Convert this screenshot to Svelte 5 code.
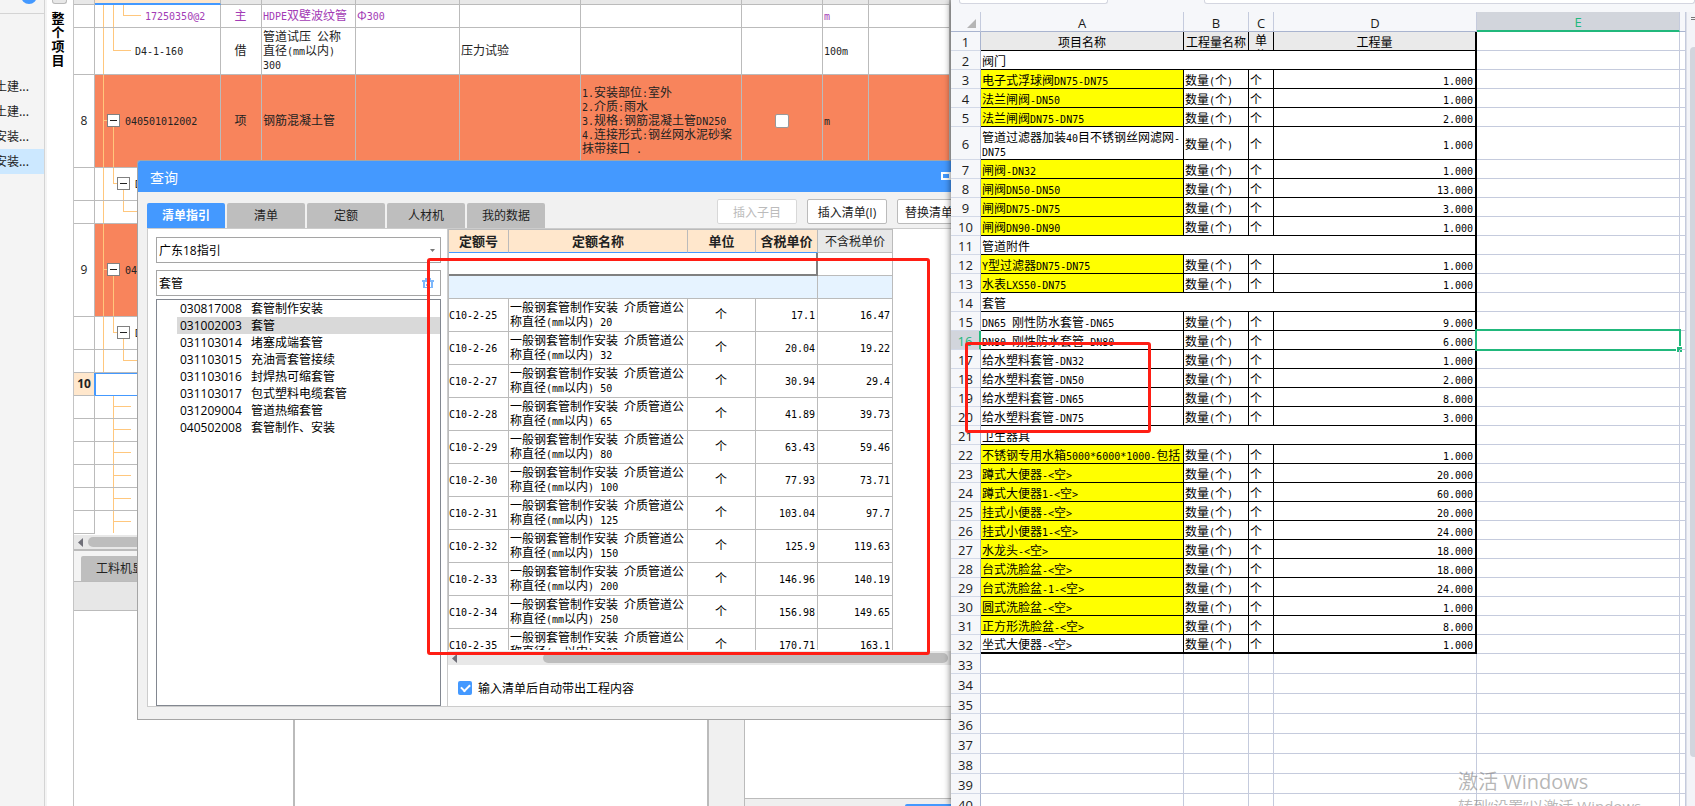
<script>
  const parts = (t) => String(t).split(/([\x20-\x7e]+)/);

  const projects = ['土建...', '土建...', '安装...', '安装...'];

  const bigOrange = { v: [[8, 0, 93], [18, 52, 93]], h: [[45, 8, 12]], box: [12, 39] };
  const nested = { v: [[8, 0, 33], [18, 0, 15], [28, 22, 33]], h: [[15, 18, 22]], box: [22, 9] };
  const stub = { v: [[18, 0, 23]], h: [[10, 18, 36]] };
  const items = [
    { h: 23, tree: { v: [[8, 0, 23], [18, 0, 23], [28, 0, 10]], h: [[10, 28, 46]] }, indent: 50, code: '17250350@2', kind: '主', name: 'HDPE双壁波纹管', spec: 'Φ300', unit: 'm', tone: 'purple' },
    { h: 47, tree: { v: [[8, 0, 47], [18, 0, 22]], h: [[22, 18, 36]] }, indent: 40, code: 'D4-1-160', kind: '借', name: '管道试压 公称\n直径(mm以内)\n300', work: '压力试验', unit: '100m' },
    { h: 93, no: '8', tree: bigOrange, indent: 30, code: '040501012002', kind: '项', name: '钢筋混凝土管', desc: '1.安装部位:室外\n2.介质:雨水\n3.规格:钢筋混凝土管DN250\n4.连接形式:钢丝网水泥砂桨\n抹带接口 .', check: true, unit: 'm', tone: 'orange' },
    { h: 33, tree: nested, indent: 40, code: 'D' },
    { h: 23, tree: { v: [[8, 0, 23], [28, 0, 10]], h: [[10, 28, 46]] } },
    { h: 93, no: '9', tree: bigOrange, indent: 30, code: '04', tone: 'orange' },
    { h: 33, tree: nested, indent: 40, code: 'D' },
    { h: 23, tree: { v: [[8, 0, 23], [28, 0, 10]], h: [[10, 28, 46]] } },
    { h: 23, no: '10', tree: { v: [], h: [] }, tone: 'current' },
    ...Array.from({ length: 6 }, () => ({ h: 23, tree: stub }))
  ];

  const tabs = ['清单指引', '清单', '定额', '人材机', '我的数据'];
  const guide = [
    ['030817008', '套管制作安装'],
    ['031002003', '套管'],
    ['031103014', '堵塞成端套管'],
    ['031103015', '充油膏套管接续'],
    ['031103016', '封焊热可缩套管'],
    ['031103017', '包式塑料电缆套管'],
    ['031209004', '管道热缩套管'],
    ['040502008', '套管制作、安装']
  ];
  const quotas = [
    [25, 20, '17.1', '16.47'],
    [26, 32, '20.04', '19.22'],
    [27, 50, '30.94', '29.4'],
    [28, 65, '41.89', '39.73'],
    [29, 80, '63.43', '59.46'],
    [30, 100, '77.93', '73.71'],
    [31, 125, '103.04', '97.7'],
    [32, 150, '125.9', '119.63'],
    [33, 200, '146.96', '140.19'],
    [34, 250, '156.98', '149.65'],
    [35, 300, '170.71', '163.1']
  ];

  const sheet = [
    ['阀门'],
    ['电子式浮球阀DN75-DN75', '1.000', 1],
    ['法兰闸阀-DN50', '1.000', 1],
    ['法兰闸阀DN75-DN75', '2.000', 1],
    ['管道过滤器加装40目不锈钢丝网滤网-\nDN75', '1.000', 0],
    ['闸阀-DN32', '1.000', 1],
    ['闸阀DN50-DN50', '13.000', 1],
    ['闸阀DN75-DN75', '3.000', 1],
    ['闸阀DN90-DN90', '1.000', 1],
    ['管道附件'],
    ['Y型过滤器DN75-DN75', '1.000', 1],
    ['水表LXS50-DN75', '1.000', 1],
    ['套管'],
    ['DN65 刚性防水套管-DN65', '9.000', 0],
    ['DN80 刚性防水套管-DN80', '6.000', 0],
    ['给水塑料套管-DN32', '1.000', 0],
    ['给水塑料套管-DN50', '2.000', 0],
    ['给水塑料套管-DN65', '8.000', 0],
    ['给水塑料套管-DN75', '3.000', 0],
    ['卫生器具'],
    ['不锈钢专用水箱5000*6000*1000-包括', '1.000', 1],
    ['蹲式大便器-<空>', '20.000', 1],
    ['蹲式大便器1-<空>', '60.000', 1],
    ['挂式小便器-<空>', '20.000', 1],
    ['挂式小便器1-<空>', '24.000', 1],
    ['水龙头-<空>', '18.000', 1],
    ['台式洗脸盆-<空>', '18.000', 1],
    ['台式洗脸盆-1-<空>', '24.000', 1],
    ['圆式洗脸盆-<空>', '1.000', 1],
    ['正方形洗脸盆-<空>', '8.000', 1],
    ['坐式大便器-<空>', '1.000', 0]
  ];
  const blanks = [33, 34, 35, 36, 37, 38, 39, 40];
  const selectedRow = 16;
</script>

{#snippet mix(t)}{#each parts(t ?? '') as s, i}{#if i % 2}<span class="latin">{s}</span>{:else}{s}{/if}{/each}{/snippet}

<div class="desktop">
  <main class="app">
    <aside class="projects">
      <div class="projects-head"><span class="dot"></span></div>
      <ul>
        {#each projects as p, i}
          <li class:active={i === 3}>{p}</li>
        {/each}
      </ul>
    </aside>
    <div class="rail">
      <span class="rail-knob"></span>
      <span class="rail-text">整个项目</span>
    </div>

    <section class="work">
      <table class="bill">
        <colgroup>
          <col style="width:21px" /><col style="width:126px" /><col style="width:41px" /><col style="width:94px" />
          <col style="width:104px" /><col style="width:121px" /><col style="width:161px" /><col style="width:81px" />
          <col style="width:46px" /><col /><col style="width:1px" />
        </colgroup>
        <thead>
          <tr>
            <th></th><th class="lead"></th><th></th><th></th><th></th><th></th><th></th><th></th><th></th><th></th><th></th>
          </tr>
        </thead>
        <tbody>
          {#each items as r}
            <tr class={r.tone} style="height:{r.h}px">
              <td class="no">{r.no ?? ''}</td>
              <td class="code" style="padding-left:{r.indent ?? 0}px"><svg width="60" height={r.h} aria-hidden="true">{#each r.tree.v as [x, a, b]}<rect {x} y={a} width="1" height={b - a} />{/each}{#each r.tree.h as [y, a, b]}<rect x={a} {y} width={b - a} height="1" />{/each}</svg>{#if r.tree.box}<button class="fold" aria-label="折叠" style="left:{r.tree.box[0]}px;top:{r.tree.box[1]}px"></button>{/if}{@render mix(r.code)}</td>
              <td class="mid">{r.kind ?? ''}</td>
              <td>{@render mix(r.name)}</td>
              <td>{@render mix(r.spec)}</td>
              <td>{@render mix(r.work)}</td>
              <td>{@render mix(r.desc)}</td>
              <td class="mid">{#if r.check}<input class="tick" type="checkbox" aria-label="主要清单" />{/if}</td>
              <td>{@render mix(r.unit)}</td>
              <td></td>
              <td></td>
            </tr>
          {/each}
        </tbody>
      </table>

      <div class="hbar">
        <svg width="5" height="9" viewBox="0 0 5 9"><path d="M5 0v9L0 4.500z" fill="#6f6f78" /></svg>
        <span class="thumb"></span>
      </div>
      <div class="strip"><button class="strip-tab">工料机显示</button></div>
      <div class="strip-tools"></div>
      <div class="panes">
        <div class="pane one"></div>
        <div class="pane two"></div>
        <div class="pane gap"></div>
        <div class="pane three"><div class="pane-foot"><span></span></div></div>
      </div>
    </section>

    <section class="dialog">
      <header>
        <h1>查询</h1>
        <svg width="10" height="8" viewBox="0 0 10 8"><path d="M1 0v8M0 1h10M0 7h10M9 0v8" fill="none" stroke="#fff" stroke-width="2" /></svg>
      </header>
      <div class="bar">
        <nav>
          {#each tabs as t, i}
            <button class:active={i === 0}>{t}</button>
          {/each}
        </nav>
        <div class="actions">
          <button disabled>插入子目</button>
          <button>插入清单(I)</button>
          <button class="cut">替换清单</button>
        </div>
      </div>
      <div class="body">
        <div class="guide">
          <div class="field">
            <select aria-label="指引库"><option>广东18指引</option></select>
            <svg width="5" height="3" viewBox="0 0 5 3"><path d="M0 0h5L2.500 3z" fill="#777" /></svg>
          </div>
          <div class="field search">
            <input type="text" value="套管" aria-label="搜索" />
            <svg width="12" height="12" viewBox="0 0 12 12"><path d="M0 3h12v2H0zM3 1h2v2H3zM7 1h2v2H7zM1 5h2v6H1zM9 5h2v6H9zM3 10h6v1H3zM4 7h1v2H4zM7 6h1v2H7z" fill="#7db7fb" /></svg>
          </div>
          <ul class="list">
            {#each guide as [code, name], i}
              <li class:active={i === 1}><span>{code}</span>{name}</li>
            {/each}
          </ul>
        </div>
        <div class="quota">
          <div class="scroll">
            <table>
              <colgroup>
                <col style="width:60px" /><col style="width:179px" /><col style="width:68px" /><col style="width:62px" /><col style="width:75px" />
              </colgroup>
              <thead>
                <tr><th>定额号</th><th>定额名称</th><th>单位</th><th>含税单价</th><th class="plain">不含税单价</th></tr>
              </thead>
              <tbody>
                <tr class="filter"><td colspan="4"></td><td></td></tr>
                <tr class="group"><td colspan="4"></td><td></td></tr>
                {#each quotas as [n, d, a, b]}
                  <tr class="item">
                    <td class="qcode">{@render mix('C10-2-' + n)}</td>
                    <td>{@render mix('一般钢套管制作安装 介质管道公\n称直径(mm以内) ' + d)}</td>
                    <td class="mid">个</td>
                    <td class="num">{@render mix(a)}</td>
                    <td class="num">{@render mix(b)}</td>
                  </tr>
                {/each}
              </tbody>
            </table>
          </div>
          <div class="hbar">
            <svg width="5" height="9" viewBox="0 0 5 9"><path d="M5 0v9L0 4.500z" fill="#6f6f78" /></svg>
            <span class="thumb"></span>
          </div>
          <label class="auto"><input type="checkbox" checked /><span>输入清单后自动带出工程内容</span></label>
        </div>
      </div>
    </section>
  </main>

  <section class="book">
    <div class="formula"><span class="namebox"></span><span class="fx"></span></div>
    <div class="grid">
      <table>
        <colgroup>
          <col style="width:30px" /><col style="width:203px" /><col style="width:65px" /><col style="width:25px" />
          <col style="width:203px" /><col style="width:203px" /><col />
        </colgroup>
        <thead>
          <tr>
            <th class="corner"><svg width="9" height="9" viewBox="0 0 9 9"><path d="M9 0v9H0z" fill="#b5b5b5" /></svg></th>
            <th>A</th><th>B</th><th>C</th><th>D</th><th class="on">E</th><th></th>
          </tr>
        </thead>
        <tbody>
          <tr class="title">
            <th>1</th><td>项目名称</td><td>工程量名称</td><td class="narrow"><div>单位</div></td><td class="edge">工程量</td><td class="free"></td><td class="free"></td>
          </tr>
          {#each sheet as [name, qty, hot], i}
            <tr class:last={i === sheet.length - 1} class:tall={i === 4}>
              <th class:on={i + 2 === selectedRow}>{i + 2}</th>
              {#if qty}
                <td class:hot>{@render mix(name)}</td>
                <td>{@render mix('数量(个)')}</td>
                <td>个</td>
                <td class="edge num">{@render mix(qty)}</td>
              {:else}
                <td colspan="4" class="edge">{name}</td>
              {/if}
              <td class="free">{#if i + 2 === selectedRow}<span class="cursor"></span>{/if}</td>
              <td class="free"></td>
            </tr>
          {/each}
          {#each blanks as n}
            <tr class="blank">
              <th>{n}</th><td class="free"></td><td class="free"></td><td class="free"></td><td class="free"></td><td class="free"></td><td class="free"></td>
            </tr>
          {/each}
        </tbody>
      </table>
      <div class="vbar">
        <span class="split"></span>
        <span class="vthumb"></span>
      </div>
    </div>
    <div class="watermark"><p>激活 Windows</p><p>转到“设置”以激活 Windows</p></div>
  </section>

  <div class="mark left"></div>
  <div class="mark right"></div>
</div>

<style>
  :global(body) {
    margin: 0;
    overflow: hidden;
  }
  .desktop {
    position: relative;
    display: flex;
    height: 100vh;
    overflow: hidden;
    background: #fff;
    color: #222;
    font: 12px/14px 'Noto Sans CJK SC', sans-serif;
  }
  .desktop :is(button, input, select) {
    box-sizing: border-box;
    margin: 0;
    font-family: 'Open Sans', 'Noto Sans CJK SC', sans-serif;
    font-size: 12px;
    color: inherit;
  }
  ul {
    margin: 0;
    padding: 0;
    list-style: none;
  }
  table {
    table-layout: fixed;
    width: 100%;
    border-collapse: separate;
    border-spacing: 0;
  }
  td,
  th {
    box-sizing: border-box;
    padding: 0 2px;
    text-align: left;
    font-weight: 400;
    white-space: pre;
    overflow: hidden;
  }
  .latin {
    font-family: 'DejaVu Sans Mono', monospace;
    font-size: 10px;
    line-height: 0;
  }
  .mid {
    text-align: center;
  }
  .num {
    text-align: right;
  }

  /* estimating application */
  .app {
    position: relative;
    display: flex;
    flex: 951 1 0;
    min-width: 0;
    overflow: hidden;
  }
  .projects {
    flex: 0 0 44px;
    background: #f4f4f4;
    border-right: 1px solid #d4d4d4;
    overflow: hidden;
  }
  .projects-head {
    display: flex;
    justify-content: flex-end;
    height: 13px;
    border-bottom: 1px solid #d4d4d4;
    margin-bottom: 60px;
  }
  .dot {
    width: 16px;
    height: 16px;
    margin: -12px 7px 0 0;
    border-radius: 50%;
    background: #49f;
  }
  .projects li {
    display: flex;
    justify-content: flex-end;
    padding: 0 15px 2px 0;
    line-height: 23px;
    white-space: nowrap;
  }
  .projects li.active {
    background: #cce8ff;
  }
  .rail {
    display: flex;
    flex-direction: column;
    align-items: center;
    box-sizing: border-box;
    flex: 0 0 28px;
    background: linear-gradient(90deg, #f4f4f4 2px, #fff 2px);
    color: #000;
  }
  .rail-knob {
    box-sizing: border-box;
    width: 15px;
    height: 4px;
    margin-bottom: 7px;
    border: 1px solid #bbb;
    border-top: 0;
    border-radius: 0 0 3px 3px;
    background: #e8e8e8;
  }
  .rail-text {
    width: 13px;
    margin-right: 2px;
    font-size: 13px;
    font-weight: 700;
    word-break: break-all;
  }
  .work {
    display: flex;
    flex-direction: column;
    flex: 1;
    min-width: 0;
    border-left: 1px solid #c4c4c4;
  }
  .bill td,
  .bill th {
    padding-left: 1px;
    padding-bottom: 2px;
    border-right: 1px solid #bbb;
    border-bottom: 1px solid #bbb;
  }
  .bill th {
    height: 5px;
    padding: 0;
    background: #e8e8e8;
  }
  .bill th.lead {
    background: #ffe7cc;
    border-bottom: 2px solid #49f;
  }
  .bill .no {
    padding: 0;
    text-align: center;
    font-family: 'Open Sans', sans-serif;
  }
  .bill .code {
    position: relative;
  }
  .code svg {
    position: absolute;
    left: 0;
    top: 0;
    fill: #ffc77d;
  }
  .desktop .fold {
    position: absolute;
    width: 13px;
    height: 13px;
    padding: 0;
    border: 1px solid #808080;
    background: linear-gradient(#222, #222) center / 7px 1px no-repeat #fff;
  }
  .purple {
    color: #a33bb5;
  }
  .orange td:not(.no) {
    background: #f8845c;
  }
  .bill .current .no {
    background: #ffe7cc;
    border-right-color: #49f;
    font-weight: 700;
  }
  .bill .current .code {
    border: 1px solid #49f;
  }
  .bill tr:last-child td:not(.no) {
    border-bottom-color: transparent;
  }
  .tick {
    display: block;
    appearance: none;
    width: 14px;
    height: 14px;
    border: 1px solid #999;
    border-radius: 2px;
    background: #fff;
  }
  .desktop .tick {
    margin: 2px auto 0;
  }
  .hbar {
    display: flex;
    align-items: center;
    gap: 5px;
    height: 14px;
    padding-left: 4px;
    background: #e8e8e8;
  }
  .hbar .thumb {
    flex: 1;
    height: 10px;
    border-radius: 5px;
    background: #bdbdbd;
  }
  .work > .hbar {
    margin-top: 1px;
    border-bottom: 2px solid #bbb;
  }
  .strip {
    display: flex;
    align-items: flex-end;
    height: 30px;
    padding-left: 7px;
    background: #f4f4f4;
    border-bottom: 1px solid #bbb;
  }
  .strip-tab {
    height: 25px;
    padding: 0 15px 2px;
    border: 0;
    border-radius: 2px 2px 0 0;
    background: #bebebe;
  }
  .strip-tools {
    height: 28px;
    background: #e7e7e7;
    border-bottom: 1px solid #bbb;
  }
  .panes {
    display: flex;
    flex: 1;
  }
  .pane {
    box-sizing: border-box;
  }
  .one {
    flex: 0 0 221px;
    border-right: 2px solid #bbb;
  }
  .two {
    flex: 0 0 414px;
    border-right: 2px solid #bbb;
  }
  .gap {
    flex: 0 0 36px;
    background: #f0f0f0;
    border-right: 1px solid #bbb;
  }
  .three {
    display: flex;
    align-items: flex-end;
    flex: 1;
  }
  .pane-foot {
    display: flex;
    justify-content: flex-end;
    align-items: flex-end;
    flex: 1;
    height: 7px;
    border-top: 1px solid #bbb;
    background: #efefef;
  }
  .pane-foot span {
    width: 46px;
    height: 2px;
    border-radius: 2px 0 0 0;
    background: #49f;
  }

  /* query window */
  .dialog {
    position: absolute;
    box-sizing: border-box;
    left: 137px;
    right: 0;
    top: 160px;
    height: 560px;
    display: flex;
    flex-direction: column;
    border: 1px solid #a5a5a5;
    border-right: 0;
    border-radius: 3px 0 0 0;
    background: #f1f1f1;
    overflow: hidden;
  }
  .dialog header {
    display: flex;
    justify-content: space-between;
    align-items: center;
    height: 31px;
    padding-left: 12px;
    background: #49f;
    color: #fff;
  }
  .dialog header svg {
    margin-bottom: 2px;
  }
  h1 {
    margin: 0;
    font-size: 14px;
    font-weight: 400;
  }
  .bar {
    display: flex;
    justify-content: space-between;
    align-items: flex-end;
    height: 36px;
    padding-left: 9px;
  }
  nav {
    display: flex;
    gap: 2px;
  }
  nav button {
    width: 78px;
    height: 25px;
    padding: 0 0 2px;
    border: 0;
    border-radius: 2px 2px 0 0;
    background: #bebebe;
  }
  nav button.active {
    background: #49f;
    color: #fff;
    font-weight: 700;
  }
  .actions {
    display: flex;
    gap: 10px;
    margin: 0 -26px 4px 0;
  }
  .actions button {
    width: 80px;
    height: 25px;
    padding: 0;
    border: 1px solid #bbb;
    border-radius: 2px;
    background: #fff;
  }
  .actions button:disabled {
    border-color: #d8d8d8;
    color: #bbb;
  }
  .actions .cut {
    padding-left: 7px;
    text-align: left;
  }
  .body {
    display: flex;
    flex: 1;
    min-height: 0;
    margin: 0 0 12px 9px;
    border: 1px solid #ccc;
    border-right: 0;
    background: #fff;
  }
  .guide {
    display: flex;
    flex-direction: column;
    flex: 0 0 285px;
    padding: 8px 6px 0 8px;
    border-right: 1px solid #ccc;
    color: #000;
  }
  .field {
    box-sizing: border-box;
    display: flex;
    align-items: center;
    height: 26px;
    margin-bottom: 7px;
    padding-right: 5px;
    border: 1px solid #a5a5a5;
  }
  .field.search {
    margin-bottom: 3px;
    padding-right: 6px;
  }
  .field :is(select, input) {
    flex: 1;
    min-width: 0;
    height: 24px;
    padding: 0 2px;
    border: 0;
    outline: 0;
    appearance: none;
    background: none;
  }
  .list {
    flex: 1;
    border: 1px solid #828790;
    font-family: 'Open Sans', 'Noto Sans CJK SC', sans-serif;
  }
  .list li {
    display: flex;
    gap: 8px;
    margin-left: 20px;
    padding-left: 3px;
    line-height: 17px;
  }
  .list li span {
    width: 63px;
  }
  .list li.active {
    background: #d9d9d9;
  }
  .quota {
    flex: 1;
    min-width: 0;
    color: #000;
  }
  .scroll {
    height: 421px;
    margin-bottom: 1px;
    overflow: hidden;
  }
  .quota table {
    width: 445px;
    border-top: 1px solid #bbb;
    border-left: 1px solid #bbb;
  }
  .quota td,
  .quota th {
    height: 23px;
    padding-left: 1px;
    padding-bottom: 2px;
    border-right: 1px solid #bbb;
    border-bottom: 1px solid #bbb;
  }
  .quota th {
    padding: 0;
    text-align: center;
    background: #ffe7cc;
    border-bottom-color: #49f;
    font-size: 13px;
    font-weight: 700;
    color: #222;
  }
  .quota th.plain {
    background: #e8e8e8;
    border-bottom-color: #bbb;
    font-size: 12px;
    font-weight: 400;
  }
  .quota .filter td:first-child {
    border-right: 2px solid #808080;
    border-bottom: 2px solid #808080;
  }
  .quota .group td {
    background: #e6f3ff;
  }
  .quota .item td {
    height: 33px;
  }
  .quota .qcode {
    padding-left: 0;
  }
  .quota .hbar {
    gap: 86px;
    padding-right: 3px;
  }
  .auto {
    display: flex;
    align-items: center;
    gap: 6px;
    padding: 16px 0 0 10px;
  }
  .auto input {
    appearance: none;
    width: 14px;
    height: 14px;
    border-radius: 2px;
    background: #49f;
    display: grid;
    place-items: center;
  }
  .auto input::before {
    content: '';
    width: 7px;
    height: 4px;
    margin-bottom: 2px;
    border: solid #fff;
    border-width: 0 0 2px 2px;
    transform: rotate(-45deg);
  }

  /* spreadsheet */
  .book {
    position: relative;
    display: flex;
    flex-direction: column;
    flex: 744 1 0;
    min-width: 0;
    background: #fff;
    box-shadow: 0 0 7px rgba(0, 0, 0, 0.6);
    color: #000;
    overflow: hidden;
  }
  .formula {
    display: flex;
    gap: 96px;
    height: 12px;
    padding-left: 8px;
    background: #f6f7fa;
  }
  .formula span {
    box-sizing: border-box;
    height: 4px;
    border: 1px solid #d4d6e0;
    border-top: 0;
    border-radius: 0 0 3px 3px;
    background: #fff;
  }
  .namebox {
    width: 149px;
  }
  .fx {
    flex: 1;
  }
  .grid {
    display: flex;
    flex: 1;
    min-height: 0;
  }
  .grid table {
    flex: 1;
    min-width: 0;
    height: max-content;
  }
  .grid th {
    height: 19px;
    padding: 2px 0 0;
    text-align: center;
    background: #f6f7fa;
    border-right: 1px solid #a9b4cf;
    border-bottom: 1px solid #d3d9e7;
    font: 13px/16px 'Open Sans', sans-serif;
    color: #1c1c1c;
  }
  .grid thead th {
    height: 20px;
    border-bottom-color: #a9b4cf;
    border-right-color: #c5cbdd;
  }
  .grid thead th.on {
    background: #d2d5dc;
    border-bottom: 2px solid #21b87c;
    color: #21b87c;
  }
  .grid thead .corner {
    padding-right: 4px;
    text-align: right;
  }
  .corner svg {
    display: block;
    margin: 2px 0 0 auto;
  }
  .grid tbody th.on {
    background: #d2d5dc;
    border-right: 2px solid #21b87c;
    color: #21b87c;
  }
  .grid td {
    height: 19px;
    padding: 1px 2px 0 1px;
    border-right: 1px solid #000;
    border-bottom: 1px solid #000;
  }
  .grid td.edge {
    border-right-width: 2px;
  }
  .grid .tall td {
    height: 33px;
  }
  .grid .title td:not(.free) {
    padding: 1px 0 0;
    background: #eaeaea;
    text-align: center;
  }
  .grid .title td.narrow {
    padding: 0;
  }
  .narrow div {
    height: 18px;
    padding: 0 6px;
    line-height: 15px;
    white-space: normal;
    word-break: break-all;
    overflow: hidden;
  }
  .grid td.hot {
    background: #ff0;
  }
  .grid .last td:not(.free) {
    border-bottom-width: 2px;
  }
  .grid td.free {
    position: relative;
    padding: 0;
    border-color: #c5cbdd;
    overflow: visible;
  }
  .grid .blank :is(td, th) {
    height: 20px;
  }
  .cursor {
    position: absolute;
    inset: -2px;
    border: 2px solid #21b87c;
  }
  .cursor::after {
    content: '';
    position: absolute;
    right: -4px;
    bottom: -4px;
    width: 5px;
    height: 5px;
    border: 1px solid #fff;
    background: #21b87c;
  }
  .vbar {
    flex: 0 0 9px;
    box-sizing: border-box;
    display: flex;
    flex-direction: column;
    align-items: flex-end;
    border-left: 1px solid #dcdfe8;
    background: #f3f4f8;
  }
  .split {
    box-sizing: border-box;
    width: 4px;
    height: 3px;
    margin: 5px 0 27px;
    border: solid #777;
    border-width: 1px 0;
  }
  .vthumb {
    width: 5px;
    height: 710px;
    border-radius: 4px 0 0 4px;
    background: #d2d5dd;
  }
  .watermark {
    position: absolute;
    left: 507px;
    top: 768px;
    color: rgba(120, 120, 120, 0.55);
    font-family: 'Open Sans', 'Noto Sans CJK SC', sans-serif;
    white-space: nowrap;
  }
  .watermark p {
    margin: 0;
    font-size: 15px;
    line-height: 20px;
  }
  .watermark p:first-child {
    font-size: 20px;
    line-height: 28px;
  }

  /* annotation boxes */
  .mark {
    position: absolute;
    box-sizing: border-box;
    border: 3px solid #ff1e14;
    border-radius: 3px;
    pointer-events: none;
  }
  .mark.left {
    left: 427px;
    top: 258px;
    width: 503px;
    height: 397px;
  }
  .mark.right {
    left: 965px;
    top: 342px;
    width: 186px;
    height: 91px;
  }
</style>
